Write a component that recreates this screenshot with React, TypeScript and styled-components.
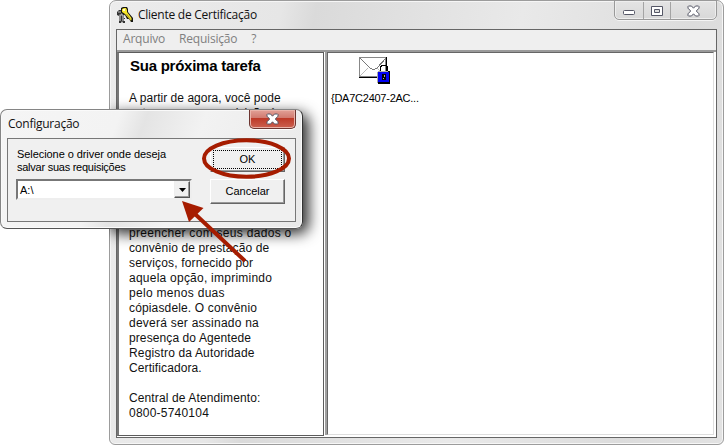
import React from 'react';
import styled, { createGlobalStyle, css } from 'styled-components';

const GlobalStyle = createGlobalStyle`
  * { box-sizing: border-box; }
  html, body { margin: 0; background: #fff; }
  body { width: 724px; height: 445px; overflow: hidden; }
`;

const Stage = styled.main`
  position: relative;
  width: 724px;
  height: 445px;
  padding-left: 109px;
  overflow: hidden;
`;

const AppWindow = styled.section`
  display: flex;
  flex-direction: column;
  width: 615px;
  height: 445px;
  padding: 0 6px 6px;
  border: 1px solid #9c9c9c;
  border-radius: 7px 7px 6px 6px;
  background: linear-gradient(100deg, #ececec 0, #e6e6e6 25%, #dadada 30%, #e9e9e9 60%, #dcdcdc 85%, #e2e2e2 100%);
  box-shadow: inset 0 0 0 1px #f6f6f6;
`;

const TitleBar = styled.header`
  display: flex;
  flex: 0 0 28px;
  align-items: flex-start;
  gap: 5px;
  padding: 5px 1px 0 0;
`;

const TitleText = styled.h1`
  margin: 0;
  font: 400 12px/18px 'Open Sans', 'Noto Sans', sans-serif;
  letter-spacing: -0.25px;
  color: #111;
  white-space: nowrap;
`;

const WindowButtons = styled.div`
  display: flex;
  width: 103px;
  height: 20px;
  margin: -6px -1px 0 auto;
  padding-top: 1px;
  border: 1px solid #999;
  border-radius: 0 0 5px 5px;
  background: linear-gradient(#e4e4e4, #d8d8d8);
  box-shadow: inset 0 0 0 1px #eee, 0 1px 0 #f4f4f4;
`;

const WindowButton = styled.button<{ $width: number; $drop?: number }>`
  display: grid;
  place-items: center;
  width: ${p => p.$width}px;
  height: 17px;
  padding: ${p => p.$drop ?? 0}px 0 0;
  border: 0;
  background: none;
  & + & { border-left: 1px solid #a4a4a4; }
`;

const Client = styled.div`
  display: flex;
  flex: 1;
  flex-direction: column;
  min-height: 0;
  border: 1px solid #666;
  background: #efefef;
`;

const MenuBar = styled.nav`
  display: flex;
  flex: 0 0 20px;
  gap: 14px;
  padding-left: 6px;
  font: 400 12px/18px 'Open Sans', 'Noto Sans', sans-serif;
  letter-spacing: -0.2px;
  color: #808080;
`;

const Panes = styled.div`
  display: flex;
  flex: 1;
  min-height: 0;
  border-top: 2px solid #9a9a9a;
  background: #fff;
`;

const TaskPane = styled.article`
  width: 207px;
  margin-bottom: 1px;
  padding: 3px 0 0 10px;
  border: 1px solid #5c5c5c;
  border-left: 2px solid #777;
  background: #fff;
  overflow: hidden;
`;

const TaskHeading = styled.h2`
  margin: 0 0 16px 1px;
  font: 700 15px/19px 'Liberation Sans', Arial, sans-serif;
  letter-spacing: -0.25px;
  color: #000;
`;

const TaskLine = styled.p<{ $spacing: number }>`
  height: 15px;
  margin: 0;
  font: 400 12px/15px 'Liberation Sans', Arial, sans-serif;
  letter-spacing: ${p => p.$spacing}px;
  color: #111;
  white-space: nowrap;
`;

const FileFrame = styled.div`
  display: flex;
  flex: 1;
  margin: 0 2px 2px 1px;
  border-left: 2px solid #a0a0a0;
`;

const FilePane = styled.div`
  flex: 1;
  border: 1px solid;
  border-color: #666 #dedede #dedede #666;
  background: #fff;
`;

const FileItem = styled.figure`
  display: flex;
  flex-direction: column;
  align-items: flex-start;
  width: 95px;
  margin: 3px 0 0 3px;
  svg { margin-left: 27px; }
`;

const bitmapFont = css`
  font: 400 11px/13px 'Liberation Sans', Arial, sans-serif;
  color: #000;
`;

const FileName = styled.figcaption`
  ${bitmapFont}
  margin-top: 7px;
  letter-spacing: -0.25px;
  white-space: nowrap;
`;

const Dialog = styled.section`
  position: absolute;
  top: 109px;
  left: 0;
  display: flex;
  flex-direction: column;
  width: 303px;
  height: 120px;
  padding: 0 6px 6px;
  border: 1px solid #858585;
  border-right-color: #333;
  border-bottom-color: #555;
  border-radius: 7px;
  background: linear-gradient(110deg, #f5f5f5 0, #f3f3f3 35%, #e4e4e4 43%, #f2f2f2 60%, #e9e9e9);
  box-shadow: inset 0 0 0 1px #fafafa;
`;

const DialogShadow = styled.div`
  position: absolute;
  top: 114px;
  left: 109px;
  width: 194px;
  height: 115px;
  border-radius: 7px;
  box-shadow: 3px 2px 14px 3px #000c;
  clip-path: inset(-18px -30px -30px 0);
`;

const DialogTitle = styled.header`
  display: flex;
  flex: 0 0 28px;
  padding: 5px 0 0 1px;
`;

const CloseButton = styled.button`
  display: grid;
  place-items: center;
  width: 47px;
  height: 19px;
  margin: -5px 0 0 auto;
  padding: 0;
  border: 1px solid #6c3530;
  border-top: 0;
  border-radius: 0 0 5px 5px;
  background: linear-gradient(#e2a197 0, #d0796e 45%, #bd3927 46%, #cc6150 100%);
  box-shadow: inset 0 0 0 1px #eab4aa, 0 1px 0 #fff;
`;

const DialogBody = styled.form`
  display: flex;
  flex: 1;
  justify-content: space-between;
  padding: 8px 10px 0 8px;
  border: 1px solid #777;
  background: #f0f0f0;
`;

const Field = styled.label`
  ${bitmapFont}
  display: block;
  width: 176px;
`;

const FieldLabel = styled.span`
  display: flex;
  flex-direction: column;
  height: 32px;
  padding: 1px 0 0 1px;
  white-space: nowrap;
`;

const LabelLine = styled.span<{ $spacing: number }>`
  letter-spacing: ${p => p.$spacing}px;
`;

const DriveSelect = styled.span`
  display: flex;
  justify-content: space-between;
  width: 176px;
  height: 21px;
  padding-left: 2px;
  border: 2px solid;
  border-color: #777 #eee #eee #777;
  background: #fff;
  line-height: 18px;
`;

const DropButton = styled.span`
  display: grid;
  place-items: center;
  width: 16px;
  height: 17px;
  border: 1px solid;
  border-color: #eee #555 #555 #eee;
  background: #f0f0f0;
  box-shadow: inset -1px -1px #999;
`;

const Actions = styled.div`
  display: flex;
  flex-direction: column;
  gap: 7px;
`;

const ActionButton = styled.button<{ $focused?: boolean }>`
  ${bitmapFont}
  width: 75px;
  height: 25px;
  padding: 0 0 1px;
  border: 1px solid;
  border-color: #fff #666 #666 #fff;
  border-radius: 0;
  background: #f0f0f0;
  box-shadow: inset -1px -1px #999;
  outline: ${p => (p.$focused ? '1px dotted #000' : 'none')};
  outline-offset: -4px;
`;

const Annotation = styled.svg`
  position: absolute;
  top: 130px;
  left: 175px;
  pointer-events: none;
`;

const taskLines: [string, number][] = [
  ['A partir de agora, você pode', 0.03],
  ['entregar a sua requisição à', 0.1],
  ['', 0], ['', 0], ['', 0], ['', 0], ['', 0], ['', 0], ['', 0],
  ['preencher com seus dados o', 0.3],
  ['convênio de prestação de', 0.12],
  ['serviços, fornecido por', 0.15],
  ['aquela opção, imprimindo', 0.24],
  ['pelo menos duas', 0.3],
  ['cópiasdele. O convênio', 0.15],
  ['deverá ser assinado na', 0.24],
  ['presença do Agentede', 0.1],
  ['Registro da Autoridade', 0.16],
  ['Certificadora.', 0.1],
  ['', 0],
  ['Central de Atendimento:', 0.12],
  ['0800-5740104', 0.22],
];

const Keys = () => (
  <svg width="17" height="18" viewBox="0 0 17 18">
    <path d="M1 6l2-2h4l2 3-1 3v2h1v1H8v2h1v2H7l-1-2-1 2H3V10L1 9z" fill="#333" />
    <path d="M2 6h4v3H4v6M7 9v6" fill="none" stroke="#c4c4c4" strokeWidth="1.2" />
    <path d="M5 2l2-1h4l1 2v3l5 6v4h-2l-2-3h-2l-2-4-4-2z" fill="#151510" />
    <path d="M6 3l2-1h2l1 2v2l4.500 6v2l-1 .5L9 8 6 6z" fill="#f5e52b" />
    <path d="M7 3h2v2H7z" fill="#fffbd0" />
    <path d="M10.500 8l4 5.500" stroke="#9c8c10" strokeWidth=".8" />
  </svg>
);

const Cross = () => (
  <svg width="13" height="12" viewBox="0 0 13 12">
    <path d="M1 1.500l.5-.5h3l2 2.200L8.500 1h3l.5.5v1.700L9.300 6 12 8.800v1.700l-.5.500h-3l-2-2.200-2 2.200h-3l-.5-.5V8.800L3.700 6 1 3.200z" fill="#fff" stroke="#555766" />
  </svg>
);

const SealedMail = () => (
  <svg width="33" height="29" viewBox="0 0 33 29" shapeRendering="crispEdges">
    <path d="M1.500 1.500h26v19h-26z" fill="#fff" stroke="#888" />
    <path d="M1 21.500h27.500V1" fill="none" stroke="#000" />
    <path d="M2 2l10 10 2 1h3l2-1 9-10" fill="none" stroke="#777" />
    <path d="M2 20l8-8M27 20l-8-8" fill="none" stroke="#bbb" />
    <path d="M22.500 15v-4l2-2h3l2 2v4" fill="none" stroke="#000" />
    <path d="M21 15h10l1 1v11l-1 1H20l-1-1V16z" fill="#000" />
    <path d="M20 15h10v1H20v11h-1V16z" fill="#aaa" />
    <path d="M20 16h11v10H20z" fill="#0000f4" />
    <path d="M24 18h4v6h-4z" fill="#000" />
    <path d="M26 19h1v2h-1zm-1 3h1v1h-1z" fill="#aaa" />
  </svg>
);

export default function App() {
  return (
    <>
      <GlobalStyle />
      <Stage>
        <AppWindow>
          <TitleBar>
            <Keys />
            <TitleText>Cliente de Certificação</TitleText>
            <WindowButtons>
              <WindowButton $width={28} $drop={3} aria-label="Minimizar">
                <svg width="12" height="5"><rect x=".5" y=".5" width="11" height="4" rx="1" fill="#fff" stroke="#555766" /></svg>
              </WindowButton>
              <WindowButton $width={27} aria-label="Maximizar">
                <svg width="12" height="10"><path d="M.5.5h11v9H.5zM3.500 3.500h5v3h-5z" fill="#fff" fillRule="evenodd" stroke="#555766" /></svg>
              </WindowButton>
              <WindowButton $width={46} aria-label="Fechar"><Cross /></WindowButton>
            </WindowButtons>
          </TitleBar>
          <Client>
            <MenuBar><span>Arquivo</span><span>Requisição</span><span>?</span></MenuBar>
            <Panes>
              <TaskPane>
                <TaskHeading>Sua próxima tarefa</TaskHeading>
                {taskLines.map(([text, spacing], i) => (
                  <TaskLine key={i} $spacing={spacing}>{text}</TaskLine>
                ))}
              </TaskPane>
              <FileFrame>
                <FilePane>
                  <FileItem><SealedMail /><FileName>{'{DA7C2407-2AC...'}</FileName></FileItem>
                </FilePane>
              </FileFrame>
            </Panes>
          </Client>
        </AppWindow>
        <DialogShadow />
        <Dialog>
          <DialogTitle>
            <TitleText>Configuração</TitleText>
            <CloseButton type="button" aria-label="Fechar"><Cross /></CloseButton>
          </DialogTitle>
          <DialogBody>
            <Field>
              <FieldLabel>
                <LabelLine $spacing={-0.07}>Selecione o driver onde deseja</LabelLine>
                <LabelLine $spacing={-0.25}>salvar suas requisições</LabelLine>
              </FieldLabel>
              <DriveSelect>A:\<DropButton><svg width="7" height="4"><path d="M0 0h7L3.500 4z" /></svg></DropButton></DriveSelect>
            </Field>
            <Actions>
              <ActionButton type="button" $focused>OK</ActionButton>
              <ActionButton type="button">Cancelar</ActionButton>
            </Actions>
          </DialogBody>
        </Dialog>
        <Annotation width="130" height="136">
          <ellipse cx="71.500" cy="28.500" rx="42.500" ry="18.300" fill="none" stroke="#a61c00" strokeWidth="4" />
          <path d="M70 131L20 84" stroke="#a61c00" strokeWidth="4" />
          <path d="M7 71l21.500 7L14 92z" fill="#a61c00" />
        </Annotation>
      </Stage>
    </>
  );
}
